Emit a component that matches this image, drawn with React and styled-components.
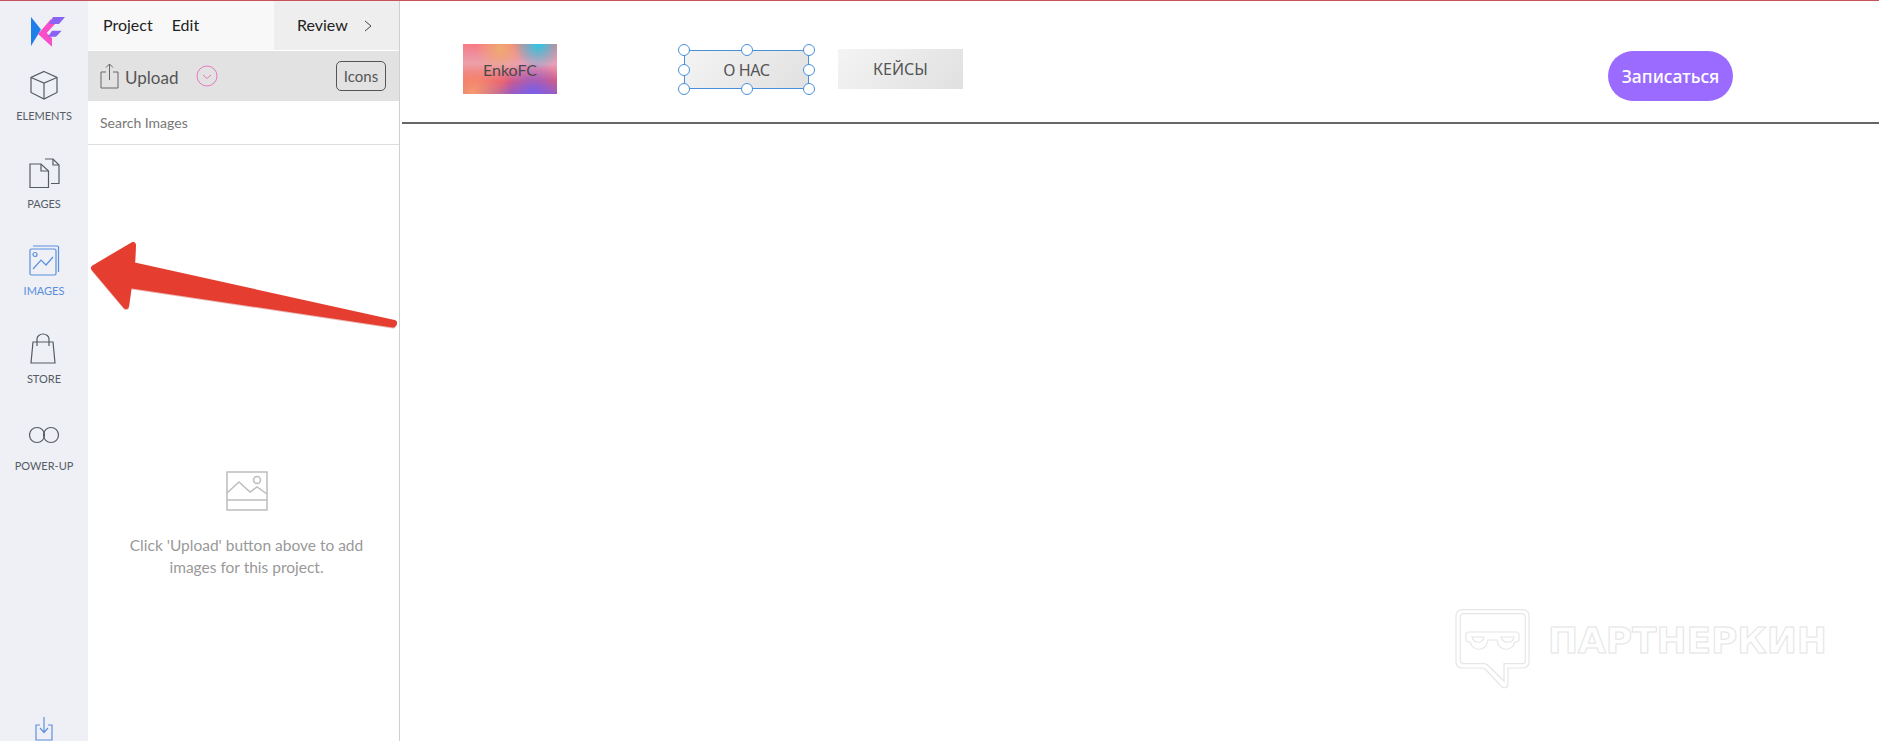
import styled, { createGlobalStyle } from 'styled-components';

const GlobalStyle = createGlobalStyle`
  html, body {
    margin: 0;
    padding: 0;
    height: 100%;
    background: #fff;
    overflow: hidden;
  }
  #root {
    height: 100%;
  }
`;

const NAV_ITEMS = [
  {
    label: 'ELEMENTS',
    icon: (
      <>
        <path d="M15 1.500 28 7.500v15L15 29 2 22.500v-15z" />
        <path d="M2 7.500 15 13l13-5.500M15 13v16" />
      </>
    ),
  },
  {
    label: 'PAGES',
    icon: (
      <>
        <path d="M16 1h8l6 6v18.500h-8" />
        <path d="M24 1v6h6" />
        <path d="M1 6h11l7.500 7v16.500H1z" />
        <path d="M12 6v7h7.500" />
      </>
    ),
  },
  {
    label: 'IMAGES',
    active: true,
    icon: (
      <>
        <path d="M4 1h24.500a1 1 0 0 1 1 1v25" />
        <rect x="1" y="4" width="26" height="26" rx="1.500" />
        <circle cx="6" cy="9.500" r="2" />
        <path d="M4 24l8-9 5 5 7-8" />
      </>
    ),
  },
  {
    label: 'STORE',
    icon: (
      <>
        <path d="M5 9h20l2 21H3z" />
        <path d="M9 13V6a6 5 0 0 1 12 0v7" />
      </>
    ),
  },
  {
    label: 'POWER-UP',
    icon: (
      <>
        <circle cx="8" cy="15" r="7.500" />
        <circle cx="22" cy="15" r="7.500" />
      </>
    ),
  },
];

const HANDLES = [
  ['0%', '0%'],
  ['50%', '0%'],
  ['100%', '0%'],
  ['0%', '50%'],
  ['100%', '50%'],
  ['0%', '100%'],
  ['50%', '100%'],
  ['100%', '100%'],
];

function App() {
  return (
    <Page>
      <GlobalStyle />
      <TopLine />
      <Workspace>
        <Sidebar>
          <Logo viewBox="0 0 34 31">
            <path d="M0 1 10 13.500 0 30z" fill="#1f7fe8" />
            <path d="M20 3 7 18l14 12.700V22l-5.300-5L24 8z" fill="#f84fc8" />
            <path d="M22 1h12l-6 7H18z" fill="#8a63f5" />
            <path d="M21 14.700h9.700L25 20.700h-8z" fill="#8a63f5" />
          </Logo>
          {NAV_ITEMS.map((item) => (
            <NavItem key={item.label} $active={item.active}>
              <NavIcon viewBox="0 0 31 31">{item.icon}</NavIcon>
              <NavLabel>{item.label}</NavLabel>
            </NavItem>
          ))}
          <SaveIcon viewBox="0 0 18 25">
            <path d="M5 9H1v15h16V9h-4" />
            <path d="M9 1v15M5 12l4 4.500 4-4.500" />
          </SaveIcon>
        </Sidebar>

        <Panel>
          <MenuRow>
            <MenuLeft>
              <MenuLink>Project</MenuLink>
              <MenuLink>Edit</MenuLink>
            </MenuLeft>
            <MenuRight>
              <MenuLink>Review</MenuLink>
              <Chevron viewBox="0 0 8 12">
                <path d="M1 1l6 5-6 5" />
              </Chevron>
            </MenuRight>
          </MenuRow>

          <UploadRow>
            <UploadIcon viewBox="0 0 20 26">
              <path d="M6 9H1v16h17V9h-5" />
              <path d="M9.500 17V1M6 4.500 9.500 1 13 4.500" />
            </UploadIcon>
            <UploadText>Upload</UploadText>
            <RoundToggle viewBox="0 0 22 22">
              <circle cx="11" cy="11" r="10" />
              <path d="M7 10l4 3.500 4-3.500" />
            </RoundToggle>
            <IconsButton>Icons</IconsButton>
          </UploadRow>

          <SearchRow>Search Images</SearchRow>

          <EmptyState>
            <EmptyIcon viewBox="0 0 42 40">
              <rect x="1" y="1" width="40" height="38" />
              <path d="M1 29h40M1 22l12-11 11 10 7-5 10 7" />
              <circle cx="31" cy="9" r="3.500" />
            </EmptyIcon>
            <EmptyText>
              Click 'Upload' button above to add
              <br />
              images for this project.
            </EmptyText>
          </EmptyState>
        </Panel>

        <Canvas>
          <SiteHeader>
            <Brand>EnkoFC</Brand>
            <SiteNav>
              <SelectedBlock>
                О НАС
                {HANDLES.map(([x, y]) => (
                  <Handle key={x + y} $x={x} $y={y} />
                ))}
              </SelectedBlock>
              <NavBlock>КЕЙСЫ</NavBlock>
            </SiteNav>
            <SignUp>Записаться</SignUp>
          </SiteHeader>

          <Watermark>
            <WatermarkIcon viewBox="-1 -1 76 82">
              <path d="M6 0.600H67a6 6 0 0 1 6 6V53a6 6 0 0 1-6 6H52V75c0 4-4 5-7 2L30 61c-1-1-2-2-4-2H6a6 6 0 0 1-6-6V6.600a6 6 0 0 1 6-6z" />
              <path d="M8 4.700H66a3.300 3.300 0 0 1 3.300 3.300V51.400a3.300 3.300 0 0 1-3.300 3.300H48V72L31 55.500c-1-.6-2-.8-3-.8H8a3.700 3.700 0 0 1-3.700-3.300V8a3.700 3.700 0 0 1 3.700-3.300z" />
              <path d="M13 23H60a3 3 0 0 1 3 3v4a3 3 0 0 1-3 3h-1c-3 10-16 10-18-2H32c-2 12-15 12-18 2h-1a3 3 0 0 1-3-3v-4a3 3 0 0 1 3-3z" />
              <path d="M16 28H28c-1 7-10 7-12 0zM45 28H58c-1 7-11 7-13 0z" />
            </WatermarkIcon>
            <WatermarkText>ПАРТНЕРКИН</WatermarkText>
          </Watermark>
        </Canvas>
      </Workspace>

      <Arrow viewBox="0 0 320 100">
        <path d="M10 30 49 7 48 27 310 85 309 86.500 45 47 42 68z" />
      </Arrow>
    </Page>
  );
}

const Page = styled.div`
  position: relative;
  height: 741px;
  display: flex;
  flex-direction: column;
  overflow: hidden;
  font-family: Lato, 'Noto Sans', sans-serif;
`;

const TopLine = styled.div`
  flex: none;
  height: 1px;
  background: #c4545c;
`;

const Workspace = styled.div`
  flex: 1;
  min-height: 0;
  display: flex;
`;

const Sidebar = styled.nav`
  flex: none;
  width: 88px;
  display: flex;
  flex-direction: column;
  align-items: center;
  padding-top: 15px;
  background: #eef0f5;
`;

const Logo = styled.svg`
  flex: none;
  width: 34px;
  height: 31px;
  margin-bottom: 23px;
  margin-left: 8px;
`;

const NavItem = styled.div`
  flex: none;
  height: 87.5px;
  display: flex;
  flex-direction: column;
  align-items: center;
  color: ${(props) => (props.$active ? '#5a8fe0' : '#555c66')};
`;

const NavIcon = styled.svg`
  width: 31px;
  height: 31px;
  fill: none;
  stroke: currentColor;
  stroke-width: 1.200;
`;

const NavLabel = styled.div`
  margin-top: 7px;
  font-size: 11px;
  line-height: 16px;
  white-space: nowrap;
`;

const SaveIcon = styled.svg`
  flex: none;
  width: 18px;
  height: 25px;
  margin-top: auto;
  margin-bottom: 0;
  fill: none;
  stroke: #5f8fe0;
  stroke-width: 1.200;
`;

const Panel = styled.section`
  flex: none;
  width: 311px;
  display: flex;
  flex-direction: column;
  border-right: 1px solid #cfcfcf;
  background: #fff;
`;

const MenuRow = styled.div`
  flex: none;
  height: 49px;
  display: flex;
  margin-bottom: 1px;
`;

const MenuLeft = styled.div`
  width: 186px;
  display: flex;
  align-items: center;
  gap: 19px;
  padding: 0 0 2px 15px;
  box-sizing: border-box;
  background: #f8f8f8;
`;

const MenuRight = styled.div`
  flex: 1;
  display: flex;
  align-items: center;
  gap: 16px;
  padding: 0 0 2px 23px;
  background: #eeeeee;
`;

const MenuLink = styled.span`
  font-size: 16px;
  color: #222;
`;

const Chevron = styled.svg`
  width: 8px;
  height: 12px;
  margin-top: 2px;
  fill: none;
  stroke: #444;
  stroke-width: 1;
`;

const UploadRow = styled.div`
  flex: none;
  height: 50px;
  display: flex;
  align-items: center;
  padding: 0 13px 0 12px;
  background: #e2e2e2;
`;

const UploadIcon = styled.svg`
  width: 20px;
  height: 26px;
  fill: none;
  stroke: #666;
  stroke-width: 1;
`;

const UploadText = styled.span`
  margin-left: 5px;
  margin-top: 2px;
  font-size: 17px;
  color: #555;
`;

const RoundToggle = styled.svg`
  width: 22px;
  height: 22px;
  margin-left: 18px;
  fill: none;
  stroke: #e878c0;
  stroke-width: 1;
`;

const IconsButton = styled.span`
  margin-left: auto;
  width: 50px;
  height: 30px;
  display: flex;
  align-items: center;
  justify-content: center;
  box-sizing: border-box;
  border: 1px solid #555;
  border-radius: 5px;
  font-size: 15px;
  color: #555;
`;

const SearchRow = styled.div`
  flex: none;
  height: 44px;
  display: flex;
  align-items: center;
  padding-left: 12px;
  box-sizing: border-box;
  border-bottom: 1px solid #dddddd;
  font-size: 14px;
  color: #777;
`;

const EmptyState = styled.div`
  display: flex;
  flex-direction: column;
  align-items: center;
  padding: 326px 0 0 6px;
`;

const EmptyIcon = styled.svg`
  width: 42px;
  height: 40px;
  fill: none;
  stroke: #bdbdbd;
  stroke-width: 1.500;
`;

const EmptyText = styled.p`
  margin: 23px 0 0;
  font-size: 15.500px;
  line-height: 22px;
  text-align: center;
  color: #999;
`;

const Canvas = styled.main`
  flex: 1;
  min-width: 0;
  display: flex;
  flex-direction: column;
  padding-left: 2px;
`;

const SiteHeader = styled.header`
  flex: none;
  height: 121px;
  display: flex;
  align-items: flex-start;
  padding-left: 61px;
  border-bottom: 2px solid #666;
`;

const blockLabel = `
  display: flex;
  align-items: center;
  justify-content: center;
  box-sizing: border-box;
`;

const Brand = styled.div`
  ${blockLabel}
  width: 94px;
  height: 50px;
  margin-top: 43px;
  font-size: 16px;
  color: #4a4a4a;
  background:
    radial-gradient(circle at 80% 0%, #28c8e8 0, rgba(40, 200, 232, 0) 28%),
    radial-gradient(circle at 75% 100%, #7a5fe8 0, rgba(122, 95, 232, 0) 38%),
    radial-gradient(circle at 40% 10%, #f0aa70 0, rgba(240, 170, 112, 0) 35%),
    radial-gradient(circle at 10% 100%, #fb9a6a 0, rgba(251, 154, 106, 0) 40%),
    linear-gradient(180deg, #f87a82 0%, #e8a0b8 40%, #e85a70 75%, #a85ab0 100%);
`;

const SiteNav = styled.div`
  display: flex;
  gap: 29px;
  margin-left: 127px;
  margin-top: 48px;
`;

const navBlock = `
  ${blockLabel}
  height: 40px;
  font-family: 'Noto Sans', sans-serif;
  font-size: 16px;
  color: #555;
  background: linear-gradient(135deg, #f4f4f4, #e0e0e0);
`;

const NavBlock = styled.div`
  ${navBlock}
  width: 125px;
`;

const SelectedBlock = styled.div`
  ${navBlock}
  position: relative;
  width: 125px;
  height: 39px;
  letter-spacing: -0.400px;
  outline: 1px solid #4a90d9;
  outline-offset: -1px;
  margin-top: 1px;
`;

const Handle = styled.span`
  position: absolute;
  left: ${(props) => props.$x};
  top: ${(props) => props.$y};
  width: 10px;
  height: 10px;
  transform: translate(-50%, -50%);
  border: 1px solid #4a90d9;
  border-radius: 50%;
  background: #fff;
`;

const SignUp = styled.button`
  width: 125px;
  height: 50px;
  margin-top: 50px;
  margin-left: 645px;
  padding: 0;
  border: 0;
  border-radius: 25px;
  background: #9b6bff;
  color: #fff;
  font-family: 'Noto Sans', sans-serif;
  font-size: 17.500px;
  font-weight: 500;
`;

const Watermark = styled.div`
  position: absolute;
  left: 1455px;
  top: 608px;
  display: flex;
  align-items: flex-start;
  gap: 17px;
`;

const WatermarkIcon = styled.svg`
  width: 76px;
  height: 82px;
  fill: none;
  stroke: #e6e6e6;
  stroke-width: 1.200;
`;

const WatermarkText = styled.span`
  margin-top: 12px;
  font-family: 'DejaVu Sans', sans-serif;
  font-size: 36px;
  font-weight: 700;
  line-height: 42px;
  letter-spacing: -0.100px;
  color: #fff;
  -webkit-text-stroke: 1px #e4e4e4;
`;

const Arrow = styled.svg`
  position: absolute;
  left: 84px;
  top: 238px;
  width: 320px;
  height: 100px;
  filter: drop-shadow(0 1px 0 #e8b8b4);

  path {
    fill: #e53e30;
    stroke: #e53e30;
    stroke-width: 6;
    stroke-linejoin: round;
  }
`;

export default App;
